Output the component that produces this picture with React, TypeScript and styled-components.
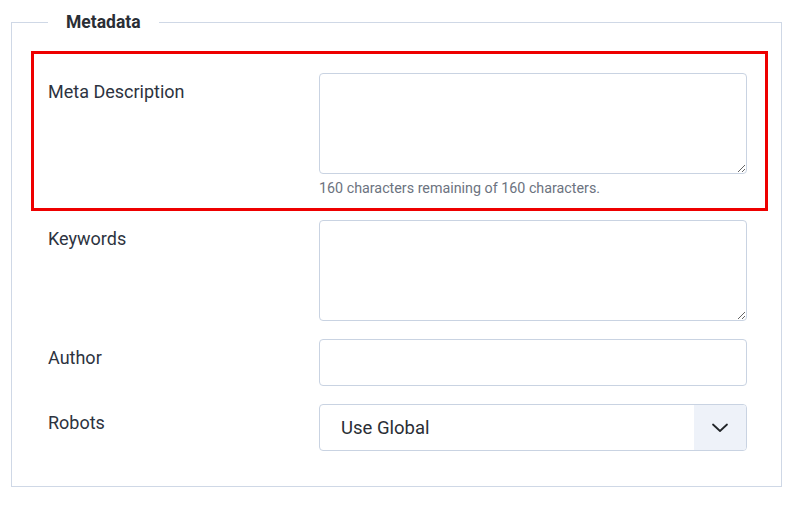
import React from "react";
import styled, { createGlobalStyle } from "styled-components";

const Global = createGlobalStyle`
  html, body { margin: 0; padding: 0; background: #ffffff; }
  body { font-family: Roboto, "Noto Sans", "Liberation Sans", sans-serif; color: #22262a; }
  * { box-sizing: border-box; }
`;

const Page = styled.div`
  padding: 10px 8px 0 11px;
`;

const Fieldset = styled.fieldset`
  margin: 0;
  border: 1px solid #cfd8e6;
  padding: 17px 13px 35px 19px;
  min-width: 0;
`;

const Legend = styled.legend`
  margin-left: 17px;
  padding: 0 18px;
  font-size: 17.5px;
  line-height: 24px;
  font-weight: 700;
  color: #2a2e35;
`;

const Highlight = styled.div`
  border: 3px solid #ee0000;
  padding: 19px 18px 10px 14px;
  margin-bottom: 9px;
`;

const Row = styled.div<{ $plain?: boolean }>`
  display: grid;
  grid-template-columns: 271px 1fr;
  align-items: start;
  padding: ${(p) => (p.$plain ? "0 21px 0 17px" : "0")};
  margin-bottom: ${(p) => (p.$plain ? "18px" : "0")};
  &:last-child { margin-bottom: 0; }
`;

const Label = styled.label`
  font-size: 18px;
  line-height: 24px;
  padding-top: 7px;
  color: #2d3340;
`;

const Control = styled.div`
  display: flex;
  flex-direction: column;
`;

const TextArea = styled.textarea`
  display: block;
  width: 100%;
  height: 101px;
  border: 1px solid #c9d3e2;
  border-radius: 4px;
  resize: vertical;
  font: inherit;
  padding: 8px 12px;
  background: #fff;
`;

const Input = styled.input`
  display: block;
  width: 100%;
  height: 47px;
  border: 1px solid #c9d3e2;
  border-radius: 4px;
  font: inherit;
  padding: 0 12px;
  background: #fff;
`;

const Help = styled.div`
  margin-top: 5px;
  font-size: 14.3px;
  line-height: 19px;
  color: #6c7380;
`;

const Select = styled.div`
  display: flex;
  height: 47px;
  border: 1px solid #c9d3e2;
  border-radius: 4px;
  overflow: hidden;
  background: #fff;
`;

const SelectValue = styled.div`
  flex: 1;
  display: flex;
  align-items: center;
  padding-left: 21px;
  font-size: 18.5px;
  color: #2a2e35;
`;

const Caret = styled.div`
  width: 52px;
  display: flex;
  align-items: center;
  justify-content: center;
  background: #eef2f9;
`;

export default function App() {
  return (
    <>
      <Global />
      <Page>
        <Fieldset>
          <Legend>Metadata</Legend>
          <Highlight>
            <Row>
              <Label>Meta Description</Label>
              <Control>
                <TextArea />
                <Help>160 characters remaining of 160 characters.</Help>
              </Control>
            </Row>
          </Highlight>
          <Row $plain>
            <Label>Keywords</Label>
            <Control>
              <TextArea />
            </Control>
          </Row>
          <Row $plain>
            <Label>Author</Label>
            <Control>
              <Input />
            </Control>
          </Row>
          <Row $plain>
            <Label>Robots</Label>
            <Control>
              <Select>
                <SelectValue>Use Global</SelectValue>
                <Caret>
                  <svg width="18" height="10" viewBox="0 0 18 10" fill="none">
                    <path d="M2 1.5 L9 8 L16 1.5" stroke="#22262a" strokeWidth="1.8" strokeLinecap="round" strokeLinejoin="round" />
                  </svg>
                </Caret>
              </Select>
            </Control>
          </Row>
        </Fieldset>
      </Page>
    </>
  );
}
